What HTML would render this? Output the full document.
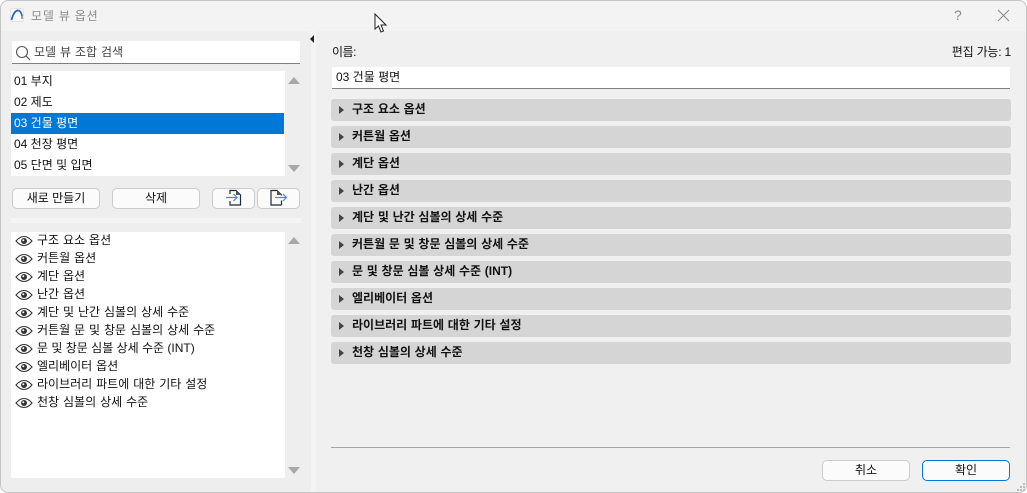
<!DOCTYPE html>
<html lang="ko"><head><meta charset="utf-8"><style>
html,body{margin:0;padding:0;background:#fff}
body{width:1027px;height:493px;overflow:hidden;position:relative;font-family:"Liberation Sans","Noto Sans CJK KR",sans-serif;font-size:12px;color:#111}
div,span{position:absolute;box-sizing:border-box;white-space:nowrap}
#w{left:0;top:0;width:1027px;height:493px;background:#eee;border:1px solid #c4c4c4;border-radius:8px;overflow:hidden}
.a{background:#d5d5d5;border-radius:3px;left:331px;width:680px;height:22px;font-weight:bold;line-height:21px;padding-left:21px;word-spacing:.4px}
.a i{position:absolute;left:8px;top:7px;border-left:5px solid #444;border-top:4px solid transparent;border-bottom:4px solid transparent}
.t{line-height:18px}
.l{word-spacing:.6px}
.b{background:#fbfbfb;border:1px solid #ccc;border-radius:5px;text-align:center;line-height:18px;height:21px;top:188px}
.up{left:288px;border-left:6px solid transparent;border-right:6px solid transparent;border-bottom:7px solid #a8a8a8}
.dn{left:288px;border-left:6px solid transparent;border-right:6px solid transparent;border-top:7px solid #a8a8a8}
svg{position:absolute}
</style></head><body>
<div id="w" style="left:0;top:0"></div>
<div style="left:1px;top:1px;width:1025px;height:30px;background:#f3f3f3;border-radius:8px 8px 0 0"></div>
<div style="left:316px;top:31px;width:710px;height:461px;background:#f0f0f0;border-radius:0 0 8px 0"></div>
<svg style="left:10px;top:8px" width="14" height="14" viewBox="0 0 14 14"><rect x=".5" y=".5" width="13" height="13" rx="2" fill="#fafafa" stroke="#e2e2e2"/><path d="M1.500 12 C3 6 5.500 2.500 8 2.500 C10 2.500 11.500 5 12 8" fill="none" stroke="#2468c0" stroke-width="1.700"/><path d="M12 8v3" stroke="#777" stroke-width="1.300"/></svg>
<div class="t" style="left:31px;top:7px;font-size:12px;color:#8c8c8c;letter-spacing:.8px">모델 뷰 옵션</div>
<div style="left:954px;top:7px;font-size:14px;line-height:16px;color:#8a8a8a">?</div>
<svg style="left:997px;top:9px" width="13" height="13"><path d="M1 1L12 12M12 1L1 12" stroke="#8a8a8a" fill="none"/></svg>
<svg style="left:374px;top:13px" width="14" height="20" viewBox="0 0 14 20"><path d="M1 1V16L4.500 13L7 19L9.500 18L7 12H12Z" fill="#fff" stroke="#222" stroke-width="1"/></svg>

<div style="left:311px;top:31px;width:5px;height:461px;background:#f4f4f4"></div>
<div style="left:310px;top:35px;border-right:4px solid #222;border-top:4px solid transparent;border-bottom:4px solid transparent"></div>

<div style="left:12px;top:41px;width:288px;height:23px;background:#fff;border-bottom:1px solid #7f7f7f"></div>
<svg style="left:15px;top:45px" width="16" height="16"><circle cx="7" cy="7" r="5.500" fill="none" stroke="#555" stroke-width="1.100"/><path d="M11 11L15 15" stroke="#555" stroke-width="1.200"/></svg>
<div class="t l" style="left:34px;top:43px;color:#444">모델 뷰 조합 검색</div>

<div style="left:11px;top:71px;width:274px;height:105px;background:#fff"></div>
<div style="left:11px;top:113px;width:273px;height:21px;background:#0078d7"></div>
<div class="t" style="left:14px;top:72px">01 부지</div>
<div class="t" style="left:14px;top:93px">02 제도</div>
<div class="t" style="left:14px;top:114px;color:#fff">03 건물 평면</div>
<div class="t" style="left:14px;top:135px">04 천장 평면</div>
<div class="t" style="left:14px;top:156px">05 단면 및 입면</div>
<div class="up" style="top:77px"></div>
<div class="dn" style="top:165px"></div>

<div class="b" style="left:12px;width:88px">새로 만들기</div>
<div class="b" style="left:112px;width:88px">삭제</div>
<div class="b" style="left:212px;width:43px"></div>
<div class="b" style="left:257px;width:43px"></div>
<svg style="left:225px;top:188px" width="18" height="18" viewBox="0 0 18 18"><path d="M5 6V2.500H11L15.500 7V17H5V13" fill="none" stroke="#1f2a36" stroke-width="1.200"/><path d="M11 2.500V7H15.500Z" fill="#555"/><path d="M1 9.500H12M8.500 6L12 9.500L8.500 13" fill="none" stroke="#3b8ee8" stroke-width="1.200"/></svg>
<svg style="left:269px;top:188px" width="22" height="18" viewBox="0 0 22 18"><path d="M12.500 17H2V2.500H8L12.500 7V7.500M12.500 12.500V17" fill="none" stroke="#1f2a36" stroke-width="1.200"/><path d="M8 2.500V7H12.500Z" fill="#555"/><path d="M6 9.500H17.500M14 6L17.500 9.500L14 13" fill="none" stroke="#3b8ee8" stroke-width="1.200"/></svg>

<div style="left:11px;top:218px;width:290px;height:5px;background:#f4f4f4"></div>
<div style="left:11px;top:232px;width:274px;height:246px;background:#fff"></div>
<div class="up" style="top:237px"></div>
<div class="dn" style="top:467px"></div>

<svg style="left:0;top:232px" width="36" height="180" fill="none">
<defs><g id="e"><path d="M16 9C19 5.500 22 4.500 24 4.500C26 4.500 29 5.500 32 9C29 12.500 26 13.500 24 13.500C22 13.500 19 12.500 16 9Z" stroke="#333" stroke-width="1.100"/><circle cx="24" cy="9" r="3" fill="#333"/><circle cx="23.300" cy="8.300" r="1" fill="#fff"/></g></defs>
<use href="#e" x="0" y="0"/><use href="#e" x="0" y="18"/><use href="#e" x="0" y="36"/><use href="#e" x="0" y="54"/><use href="#e" x="0" y="72"/><use href="#e" x="0" y="90"/><use href="#e" x="0" y="108"/><use href="#e" x="0" y="126"/><use href="#e" x="0" y="144"/><use href="#e" x="0" y="162"/>
</svg>
<div class="t l" style="left:37px;top:231px">구조 요소 옵션</div>
<div class="t l" style="left:37px;top:249px">커튼월 옵션</div>
<div class="t l" style="left:37px;top:267px">계단 옵션</div>
<div class="t l" style="left:37px;top:285px">난간 옵션</div>
<div class="t l" style="left:37px;top:303px">계단 및 난간 심볼의 상세 수준</div>
<div class="t l" style="left:37px;top:321px">커튼월 문 및 창문 심볼의 상세 수준</div>
<div class="t" style="left:37px;top:339px">문 및 창문 심볼 상세 수준 (INT)</div>
<div class="t l" style="left:37px;top:357px">엘리베이터 옵션</div>
<div class="t l" style="left:37px;top:375px">라이브러리 파트에 대한 기타 설정</div>
<div class="t l" style="left:37px;top:393px">천창 심볼의 상세 수준</div>

<div class="t" style="left:332px;top:43px;letter-spacing:-.5px">이름:</div>
<div class="t" style="right:16px;top:43px;letter-spacing:-.2px">편집 가능: 1</div>
<div style="left:332px;top:67px;width:678px;height:22px;background:#fff;border-bottom:1px solid #7f7f7f"></div>
<div class="t" style="left:336px;top:68px">03 건물 평면</div>

<div class="a" style="top:99px"><i></i>구조 요소 옵션</div>
<div class="a" style="top:126px"><i></i>커튼월 옵션</div>
<div class="a" style="top:153px"><i></i>계단 옵션</div>
<div class="a" style="top:180px"><i></i>난간 옵션</div>
<div class="a" style="top:207px"><i></i>계단 및 난간 심볼의 상세 수준</div>
<div class="a" style="top:234px"><i></i>커튼월 문 및 창문 심볼의 상세 수준</div>
<div class="a" style="top:261px"><i></i>문 및 창문 심볼 상세 수준 (INT)</div>
<div class="a" style="top:288px"><i></i>엘리베이터 옵션</div>
<div class="a" style="top:315px"><i></i>라이브러리 파트에 대한 기타 설정</div>
<div class="a" style="top:342px"><i></i>천창 심볼의 상세 수준</div>

<div style="left:331px;top:447px;width:679px;height:1px;background:#a5a5a5"></div>
<div class="b" style="left:822px;top:460px;width:88px">취소</div>
<div class="b" style="left:922px;top:460px;width:88px;border-color:#0078d7">확인</div>
<svg style="left:1016px;top:482px" width="10" height="10" fill="#bbb"><rect x="7" y="1" width="2" height="2"/><rect x="4" y="4" width="2" height="2"/><rect x="7" y="4" width="2" height="2"/><rect x="1" y="7" width="2" height="2"/><rect x="4" y="7" width="2" height="2"/><rect x="7" y="7" width="2" height="2"/></svg>
</body></html>
